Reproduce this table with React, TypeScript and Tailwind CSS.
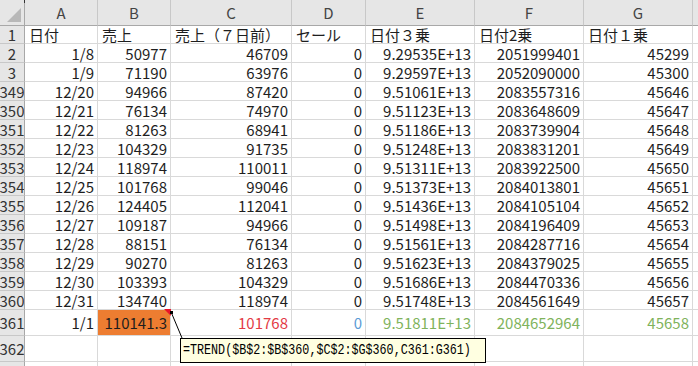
import React from "react";

const rows: { n: string; h: string; cells: string[]; tall?: boolean }[] = [
  { n: "2", h: "h-[19px]", cells: ["1/8", "50977", "46709", "0", "9.29535E+13", "2051999401", "45299"] },
  { n: "3", h: "h-[19px]", cells: ["1/9", "71190", "63976", "0", "9.29597E+13", "2052090000", "45300"] },
  { n: "349", h: "h-[19px]", cells: ["12/20", "94966", "87420", "0", "9.51061E+13", "2083557316", "45646"] },
  { n: "350", h: "h-[19px]", cells: ["12/21", "76134", "74970", "0", "9.51123E+13", "2083648609", "45647"] },
  { n: "351", h: "h-[19px]", cells: ["12/22", "81263", "68941", "0", "9.51186E+13", "2083739904", "45648"] },
  { n: "352", h: "h-[19px]", cells: ["12/23", "104329", "91735", "0", "9.51248E+13", "2083831201", "45649"] },
  { n: "353", h: "h-[19px]", cells: ["12/24", "118974", "110011", "0", "9.51311E+13", "2083922500", "45650"] },
  { n: "354", h: "h-[19px]", cells: ["12/25", "101768", "99046", "0", "9.51373E+13", "2084013801", "45651"] },
  { n: "355", h: "h-[19px]", cells: ["12/26", "124405", "112041", "0", "9.51436E+13", "2084105104", "45652"] },
  { n: "356", h: "h-[19px]", cells: ["12/27", "109187", "94966", "0", "9.51498E+13", "2084196409", "45653"] },
  { n: "357", h: "h-[19px]", cells: ["12/28", "88151", "76134", "0", "9.51561E+13", "2084287716", "45654"] },
  { n: "358", h: "h-[19px]", cells: ["12/29", "90270", "81263", "0", "9.51623E+13", "2084379025", "45655"] },
  { n: "359", h: "h-[19px]", cells: ["12/30", "103393", "104329", "0", "9.51686E+13", "2084470336", "45656"] },
  { n: "360", h: "h-[19px]", cells: ["12/31", "134740", "118974", "0", "9.51748E+13", "2084561649", "45657"] },
];

const GRID = "grid grid-cols-[25px_73px_73px_121px_74px_109px_109px_109px_1fr]";
const FONT = { fontFamily: '"Noto Sans CJK JP", "Noto Sans", sans-serif' };

function RowNum({ n }: { n: string }) {
  return (
    <div className="flex items-center justify-center bg-[#e6e6e6] border-r border-r-[#a8a8a8] border-b border-b-[#c8c8c8] text-[#333] text-[15px] leading-none overflow-hidden whitespace-nowrap">
      {n}
    </div>
  );
}

function Cell({ children, cls = "" }: { children?: React.ReactNode; cls?: string }) {
  return (
    <div className={"flex items-center justify-end pr-[3px] border-r border-b border-[#d9d9d9] text-[15px] leading-none whitespace-nowrap overflow-visible " + cls}>
      {children}
    </div>
  );
}

export default function App() {
  const headers = ["A", "B", "C", "D", "E", "F", "G"];
  const titles = ["日付", "売上", "売上（７日前）", "セール", "日付３乗", "日付2乗", "日付１乗"];
  return (
    <div className="relative w-[698px] h-[366px] overflow-hidden bg-white text-[#1e1e1e]" style={FONT}>
      {/* Column header */}
      <div className={GRID + " h-[26px]"}>
        <div className="relative bg-[#e6e6e6] border-r border-r-[#a8a8a8] border-b border-b-[#a8a8a8]">
          <svg className="absolute left-0 top-0" width="25" height="26" viewBox="0 0 25 26">
            <polygon points="7,22 21,22 21,8" fill="#b8b8b8" />
          </svg>
          <div className="absolute right-[-1px] top-0 w-[1px] h-[3px] bg-[#333]" />
        </div>
        {headers.map((h) => (
          <div key={h} className="flex items-center justify-center bg-[#e6e6e6] border-r border-r-[#c8c8c8] border-b border-b-[#a8a8a8] text-[15px] text-[#444] leading-none">
            {h}
          </div>
        ))}
        <div className="bg-[#e6e6e6] border-b border-b-[#a8a8a8]" />
      </div>

      {/* Row 1 */}
      <div className={GRID + " h-[18px]"}>
        <RowNum n="1" />
        {titles.map((t, i) => (
          <div key={i} className="flex items-center justify-start pl-[4px] border-r border-b border-[#d9d9d9] text-[15px] leading-none whitespace-nowrap">
            {t}
          </div>
        ))}
        <div className="border-b border-[#d9d9d9]" />
      </div>

      {rows.map((r) => (
        <div key={r.n} className={GRID + " " + r.h}>
          <RowNum n={r.n} />
          {r.cells.map((c, i) => (
            <Cell key={i}>{c}</Cell>
          ))}
          <div className="border-b border-[#d9d9d9]" />
        </div>
      ))}

      {/* Row 361 */}
      <div className={GRID + " h-[26px]"}>
        <RowNum n="361" />
        <Cell>1/1</Cell>
        <Cell cls="bg-[#ed7d31] relative">
          110141.3
          <svg className="absolute right-[-1px] top-[-1px]" width="8" height="8" viewBox="0 0 8 8">
            <polygon points="1,0 8,0 8,7" fill="#e8132a" />
          </svg>
        </Cell>
        <Cell cls="text-[#e33b45]">101768</Cell>
        <Cell cls="text-[#5b9bd5]">0</Cell>
        <Cell cls="text-[#7fb35c]">9.51811E+13</Cell>
        <Cell cls="text-[#7fb35c]">2084652964</Cell>
        <Cell cls="text-[#7fb35c]">45658</Cell>
        <div className="border-b border-[#d9d9d9]" />
      </div>

      {/* Row 362 */}
      <div className={GRID + " h-[26px]"}>
        <RowNum n="362" />
        {headers.map((h) => (
          <Cell key={h} />
        ))}
        <div className="border-b border-[#d9d9d9]" />
      </div>

      {/* Row 363 (partial) */}
      <div className={GRID + " h-[26px]"}>
        <RowNum n="" />
        {headers.map((h) => (
          <Cell key={h} />
        ))}
        <div />
      </div>

      {/* Comment connector line */}
      <svg className="absolute left-0 top-0 pointer-events-none" width="698" height="366" viewBox="0 0 698 366">
        <line x1="171.5" y1="313" x2="182" y2="338" stroke="#000" strokeWidth="1" />
        <rect x="170" y="311" width="3" height="3" fill="#000" />
      </svg>

      {/* Formula tooltip */}
      <div className="absolute left-[180px] top-[338px] w-[306px] h-[25px] border border-black bg-[#ffffe1] overflow-hidden">
        <div
          className="absolute left-[2px] top-[3px] origin-left scale-x-[0.78] whitespace-nowrap text-[15px] leading-[17px] text-black"
          style={{ fontFamily: '"Liberation Mono", monospace' }}
        >
          =TREND($B$2:$B$360,$C$2:$G$360,C361:G361)
        </div>
      </div>
    </div>
  );
}
